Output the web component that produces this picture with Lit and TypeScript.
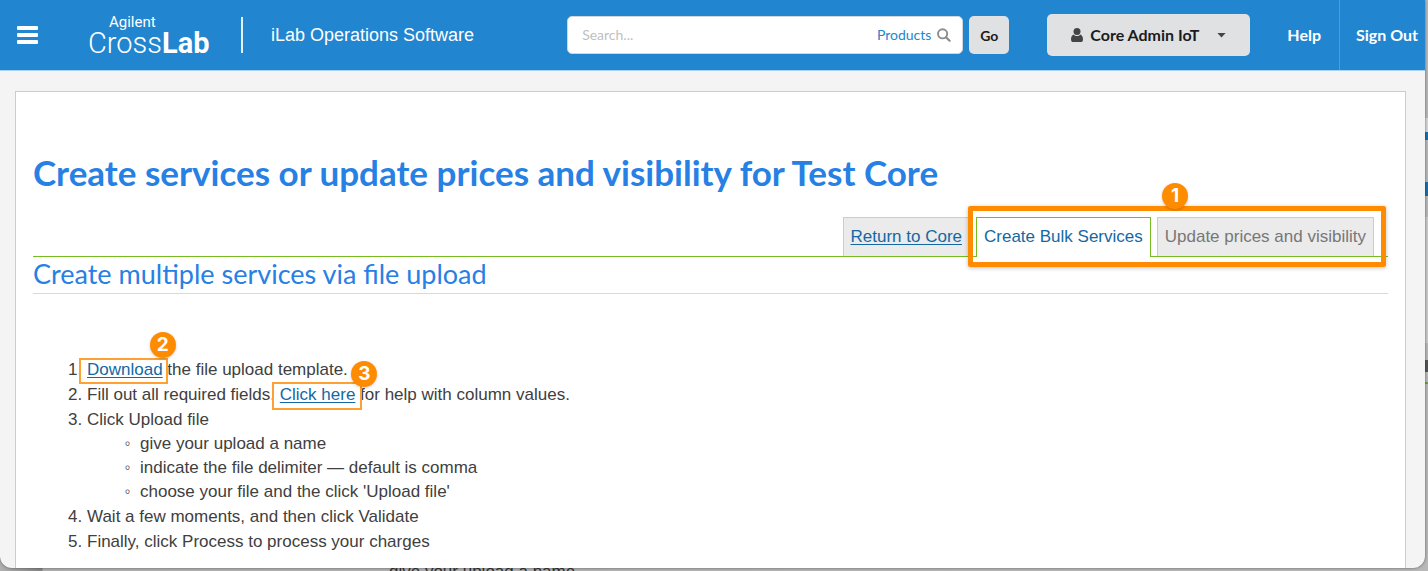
import { LitElement, html, css } from "lit";
import { customElement, property } from "lit/decorators.js";

@customElement("site-header")
class SiteHeader extends LitElement {
  static styles = css`
    :host {
      display: block;
      font-family: Lato, "Liberation Sans", sans-serif;
    }
    .bar {
      display: flex;
      align-items: center;
      height: 71px;
      background: #2185d0;
      border-bottom: 1px solid #a9d2f0;
      box-sizing: border-box;
      color: #fff;
    }
    button {
      font-family: inherit;
      border: 0;
      margin: 0;
      padding: 0;
      background: none;
      cursor: pointer;
    }
    .menu {
      display: flex;
      margin: 0 51px 0 17px;
    }
    .brand {
      display: flex;
      align-items: center;
      flex: none;
      color: #fff;
      text-decoration: none;
    }
    .logo {
      display: block;
      overflow: visible;
    }
    .logo text {
      fill: #fff;
      font-family: Roboto, "Liberation Sans", sans-serif;
    }
    .agilent {
      font-size: 15px;
    }
    .cross {
      font-size: 29px;
      font-weight: 300;
    }
    .lab {
      font-weight: 700;
    }
    .product {
      flex: none;
      margin-left: 30px;
      padding: 8px 0 8px 28px;
      border-left: 2px solid #e4f1fb;
      font: 18px/20px "Liberation Sans", Arial, sans-serif;
      white-space: nowrap;
    }
    .search {
      display: flex;
      flex: 1;
      gap: 6px;
      min-width: 0;
      margin: 0 38px 0 93px;
    }
    .field {
      display: flex;
      flex: 1;
      align-items: center;
      min-width: 0;
      height: 38px;
      padding: 0 11px 0 14px;
      box-sizing: border-box;
      border: 1px solid #d0d6da;
      border-radius: 5px;
      background: #fff;
    }
    .field input {
      flex: 1;
      min-width: 0;
      padding: 0;
      border: 0;
      outline: 0;
      background: none;
      font: 14px/20px Lato, sans-serif;
      color: #333;
    }
    .field input::placeholder {
      color: #bfbfbf;
      opacity: 1;
    }
    .scope {
      margin-right: 6px;
      font-size: 14px;
      line-height: 20px;
      color: #2185d0;
    }
    .go {
      width: 40px;
      height: 38px;
      border-radius: 5px;
      background: #e0e1e2;
      color: #1b1c1d;
      font-size: 14px;
      font-weight: 700;
    }
    .user {
      display: flex;
      flex: none;
      align-items: center;
      height: 42px;
      padding: 0 24px;
      border-radius: 5px;
      background: #e0e1e2;
      color: #1b1c1d;
      font-size: 16px;
      font-weight: 700;
      line-height: 20px;
    }
    .user .name {
      margin: 0 18px 0 7px;
    }
    nav {
      display: flex;
      flex: none;
      align-self: stretch;
    }
    nav a {
      display: flex;
      align-items: center;
      color: #fff;
      font-size: 16px;
      font-weight: 700;
      text-decoration: none;
    }
    .help {
      padding: 0 18px 0 37px;
      border-right: 1px solid #4d9dda;
    }
    .out {
      padding: 0 7px 0 16px;
    }
  `;

  render() {
    return html`
      <header class="bar">
        <button class="menu" aria-label="Menu">
          <svg width="21" height="18" viewBox="0 0 21 18" fill="#fff">
            <rect width="21" height="4" rx="1" />
            <rect y="7" width="21" height="4" rx="1" />
            <rect y="14" width="21" height="4" rx="1" />
          </svg>
        </button>
        <a class="brand" href="#home">
          <svg class="logo" width="122" height="46" viewBox="0 0 122 46">
            <text class="agilent" x="20" y="15">Agilent</text>
            <text class="cross" x="-1" y="41">Cross<tspan class="lab">Lab</tspan></text>
          </svg>
        </a>
        <div class="product">iLab Operations Software</div>
        <form class="search" @submit=${(e: Event) => e.preventDefault()}>
          <div class="field">
            <input type="text" placeholder="Search..." aria-label="Search" />
            <button class="scope" type="button">Products</button>
            <svg width="14" height="14" viewBox="0 0 14 14" fill="none" stroke="#8c8c8c">
              <circle cx="5.6" cy="5.8" r="4.6" stroke-width="1.9" />
              <path d="M9 9.2 12.6 12.8" stroke-width="2.2" stroke-linecap="round" />
            </svg>
          </div>
          <button class="go" type="submit">Go</button>
        </form>
        <button class="user" type="button" aria-haspopup="menu">
          <svg width="12" height="14" viewBox="0 0 12 14" fill="#444">
            <circle cx="6" cy="3.6" r="3.5" />
            <path d="M2.6 6.4C1 6.9 0 8.8 0 11.4 0 13 .9 14 2.2 14H9.8C11.1 14 12 13 12 11.4 12 8.8 11 6.9 9.4 6.4 8.5 7.4 7.3 7.9 6 7.9S3.5 7.4 2.6 6.4Z" />
          </svg>
          <span class="name">Core Admin IoT</span>
          <svg width="9" height="5" viewBox="0 0 9 5" fill="#444"><path d="M.4 0H8.6L4.5 4.6Z" /></svg>
        </button>
        <nav>
          <a class="help" href="#help">Help</a>
          <a class="out" href="#signout">Sign Out</a>
        </nav>
      </header>
    `;
  }
}

@customElement("call-out")
class CallOut extends LitElement {
  @property() step = "";

  static styles = css`
    :host {
      position: absolute;
      box-sizing: border-box;
      border: 2px solid #ffa033;
      pointer-events: none;
    }
    .badge {
      position: absolute;
      top: var(--badge-top);
      right: var(--badge-right);
      width: 26px;
      height: 26px;
      border-radius: 50%;
      background: #ff8c00;
      box-shadow: 0 1px 3px rgba(0, 0, 0, 0.2);
      color: #fff;
      font: 700 19px/26px Inter, "Liberation Sans", sans-serif;
      text-align: center;
    }
  `;

  render() {
    return html`<span class="badge">${this.step}</span>`;
  }
}

@customElement("app-root")
class AppRoot extends LitElement {
  static styles = css`
    :host {
      display: block;
      position: relative;
      height: 100vh;
      overflow: hidden;
      background: #bdbdbd;
      font: 17px/24px "Liberation Sans", Arial, sans-serif;
      color: #404040;
    }
    .behind {
      position: absolute;
      inset: 0;
      background: linear-gradient(90deg, #b0b0b0, #858585 42px, #b0b0b0 43px, #b8b8b8);
    }
    .behind-text {
      position: absolute;
      left: 389px;
      bottom: -13px;
      line-height: 24px;
      color: #333;
    }
    .mark {
      position: absolute;
      right: 0;
      width: 3px;
    }
    .m1 { top: 118px; height: 14px; background: #d6d6d6; }
    .m2 { top: 132px; height: 8px; background: #1b6fb0; }
    .m3 { top: 182px; height: 14px; background: #1b6fb0; }
    .m4 { top: 217px; height: 126px; background: #c9c9c9; }
    .m5 { top: 360px; height: 12px; background: #555; }
    .m6 { top: 382px; height: 2px; background: #7a9e3f; }
    .window {
      position: relative;
      display: flex;
      flex-direction: column;
      height: calc(100vh - 3px);
      margin-right: 3px;
      overflow: hidden;
      border-radius: 0 0 12px 12px;
      background: #f4f4f4;
      box-shadow: 0 0 3px rgba(0, 0, 0, 0.5);
    }
    main {
      flex: 1;
      margin: 20px 19px 0 15px;
      padding: 62px 17px 0;
      border: 1px solid #ccc;
      border-bottom: 0;
      background: #fff;
    }
    h1,
    h2 {
      margin: 0;
      font-family: Lato, sans-serif;
      color: #2780e3;
    }
    h1 {
      font-size: 35px;
      line-height: 36px;
      font-weight: 700;
    }
    h2 {
      padding-bottom: 2px;
      border-bottom: 1px solid #d3dbe2;
      font-size: 27px;
      line-height: 34px;
      font-weight: 400;
    }
    a {
      color: #1468a3;
      text-underline-offset: 2px;
    }
    .tabs {
      display: flex;
      justify-content: flex-end;
      gap: 6px;
      margin-top: 27px;
      padding-right: 14px;
      border-bottom: 1px solid #76bc21;
    }
    .group {
      position: relative;
      display: flex;
      gap: 6px;
    }
    .tab {
      padding: 7px 7px;
      border: 1px solid #ccc;
      border-bottom: 0;
      background: #ebebeb;
      white-space: nowrap;
    }
    .tab.plain {
      color: #777;
      text-decoration: none;
    }
    .tab.current {
      margin-bottom: -1px;
      padding-bottom: 8px;
      border-color: #76bc21;
      background: #fff;
      text-decoration: none;
    }
    .tabs-note {
      inset: -11px -12px -11px -8px;
      border: 5px solid #ff8c00;
      border-radius: 2px;
      box-shadow: 0 1px 4px rgba(0, 0, 0, 0.25);
      --badge-top: -28px;
      --badge-right: 193px;
    }
    ol {
      margin: 64px 0 0;
      padding-left: 54px;
    }
    ol > li + li {
      margin-top: 1px;
    }
    ul {
      margin: 0;
      padding-left: 53px;
      list-style-type: "◦  ";
    }
    .target {
      position: relative;
    }
    .download-note {
      inset: -2px -5px -5px -8px;
      --badge-top: -28px;
      --badge-right: -10px;
    }
    .help-note {
      inset: -3px -7px -6px -8px;
      --badge-top: -23px;
      --badge-right: -17px;
    }
  `;

  render() {
    return html`
      <div class="behind" aria-hidden="true">
        <span class="behind-text">give your upload a name</span>
        <i class="mark m1"></i><i class="mark m2"></i><i class="mark m3"></i>
        <i class="mark m4"></i><i class="mark m5"></i><i class="mark m6"></i>
      </div>
      <div class="window">
        <site-header></site-header>
        <main>
          <h1>Create services or update prices and visibility for Test Core</h1>
          <nav class="tabs">
            <a class="tab" href="#core">Return to Core</a>
            <div class="group">
              <a class="tab current" href="#create" aria-current="page">Create Bulk Services</a>
              <a class="tab plain" href="#update">Update prices and visibility</a>
              <call-out class="tabs-note" step="1"></call-out>
            </div>
          </nav>
          <h2>Create multiple services via file upload</h2>
          <ol>
            <li>
              <span class="target"><a href="#template">Download</a><call-out class="download-note" step="2"></call-out></span>
              the file upload template.
            </li>
            <li>
              Fill out all required fields.
              <span class="target"><a href="#columns">Click here</a><call-out class="help-note" step="3"></call-out></span>
              for help with column values.
            </li>
            <li>
              Click Upload file
              <ul>
                <li>give your upload a name</li>
                <li>indicate the file delimiter — default is comma</li>
                <li>choose your file and the click 'Upload file'</li>
              </ul>
            </li>
            <li>Wait a few moments, and then click Validate</li>
            <li>Finally, click Process to process your charges</li>
          </ol>
        </main>
      </div>
    `;
  }
}
